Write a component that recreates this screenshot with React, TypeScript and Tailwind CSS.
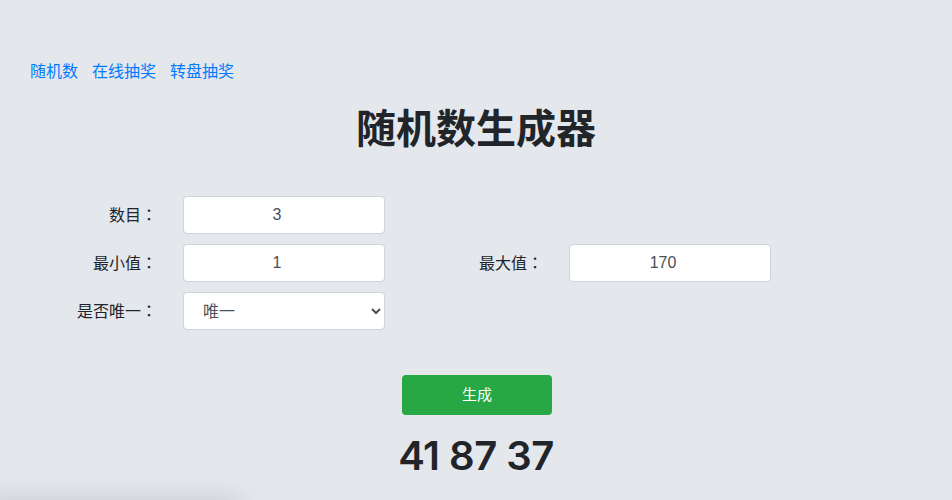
import React from "react";

const font = {
  fontFamily: '"Liberation Sans", "Noto Sans CJK SC", sans-serif',
};

function Colon() {
  return <span style={{ fontFamily: '"Noto Sans CJK TC", sans-serif' }}>：</span>;
}

function Field({ label, value }: { label: string; value: string }) {
  return (
    <div className="flex items-center">
      <label className="w-[157px] text-right text-[16px] text-[#212529]">
        {label}
        <Colon />
      </label>
      <input
        readOnly
        value={value}
        className="ml-[26px] h-[38px] w-[202px] rounded-[4px] border border-[#ced4da] bg-white pr-[14px] text-center text-[16px] text-[#495057] outline-none"
      />
    </div>
  );
}

export default function App() {
  return (
    <div style={font} className="relative h-[500px] w-full overflow-hidden bg-[#e4e7ec]">
      <div className="flex gap-[14px] px-[30px] pt-[60px] text-[16px] text-[#007bff]">
        <a>随机数</a>
        <a>在线抽奖</a>
        <a>转盘抽奖</a>
      </div>

      <h1 className="mt-[20px] text-center text-[40px] font-bold leading-[50px] text-[#212529]">
        随机数生成器
      </h1>

      <div className="mt-[42px] flex flex-col gap-[10px]">
        <Field label="数目" value="3" />
        <div className="flex items-center">
          <Field label="最小值" value="1" />
          <div className="ml-[1px]">
            <Field label="最大值" value="170" />
          </div>
        </div>
        <div className="flex items-center">
          <label className="w-[157px] text-right text-[16px] text-[#212529]">
            是否唯一
            <Colon />
          </label>
          <select className="ml-[26px] h-[38px] w-[202px] rounded-[4px] border border-[#ced4da] bg-white pl-[15px] text-[16px] text-[#495057] outline-none">
            <option>唯一</option>
          </select>
        </div>
      </div>

      <div className="mt-[45px] flex justify-center">
        <button className="ml-[2px] h-[40px] w-[150px] rounded-[4px] bg-[#28a745] text-[15px] text-white">
          生成
        </button>
      </div>

      <div
        style={{ fontFamily: "Inter, sans-serif" }}
        className="mt-[13px] text-center text-[40px] font-semibold leading-[56px] tracking-[-0.5px] text-[#212529]"
      >
        41 87 37
      </div>

      <div className="absolute left-[-20px] top-[510px] h-[40px] w-[260px] rounded-lg bg-[#d0d2d6] shadow-[0_-6px_30px_rgba(0,0,0,0.18)]" />
    </div>
  );
}
